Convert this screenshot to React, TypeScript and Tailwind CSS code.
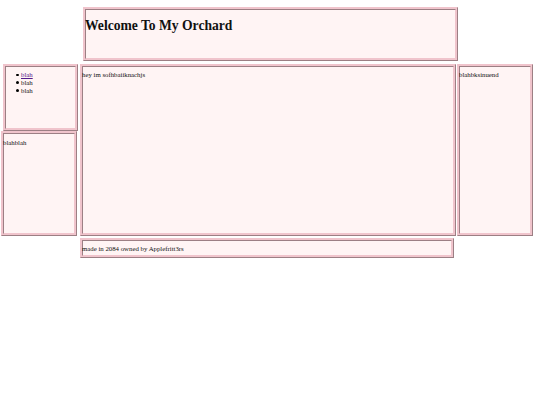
export default function App(){
  const box = "bg-[#fff4f4] border-[3px] [border-style:ridge] border-[#f0c4cc]"
  const items = ['blah','blah','blah']
  return (
    <div className="w-[540px] h-[405px] bg-white text-[#111] text-[6.8px] leading-[7.8px]" style={{fontFamily:'"Liberation Serif", serif'}}>
      <div className="pt-[7px] pl-[83px]">
        <div className={`${box} w-[375px] h-[54px] pt-[8px]`}>
          <h1 className="text-[13.6px] leading-[16px] font-bold -ml-[1px]">Welcome To My Orchard</h1>
        </div>
      </div>
      <div className="flex mt-[3px]">
        <div className="flex flex-col w-[78px]">
          <div className={`${box} ml-[3px] w-[75px] h-[67px] pt-[4px]`}>
            <ul className="pl-[10px]">
              {items.map((t,i)=>(
                <li key={i} className="flex items-center">
                  <span className="w-[2.5px] h-[2.5px] rounded-full bg-black mr-[2.5px]"></span>
                  {i===0 ? <a href="#" className="underline text-[#551a8b]">{t}</a> : <span>{t}</span>}
                </li>
              ))}
            </ul>
          </div>
          <div className={`${box} ml-[1px] w-[76px] h-[105px] pt-[5px] -indent-[1px]`}>blahblah</div>
        </div>
        <div className={`${box} ml-[2px] w-[376px] h-[172px] pt-[4px] -indent-[1px]`}>hey im sofhbaiiknachjs</div>
        <div className={`${box} ml-[1px] w-[76px] h-[172px] pt-[4px] -indent-[1px]`}>blahbksinuend</div>
      </div>
      <div className={`${box} ml-[80px] mt-[2px] w-[374px] h-[20px] pt-[4px] -indent-[1px]`}>made in 2084 owned by Applefritt3rs</div>
    </div>
  )
}
